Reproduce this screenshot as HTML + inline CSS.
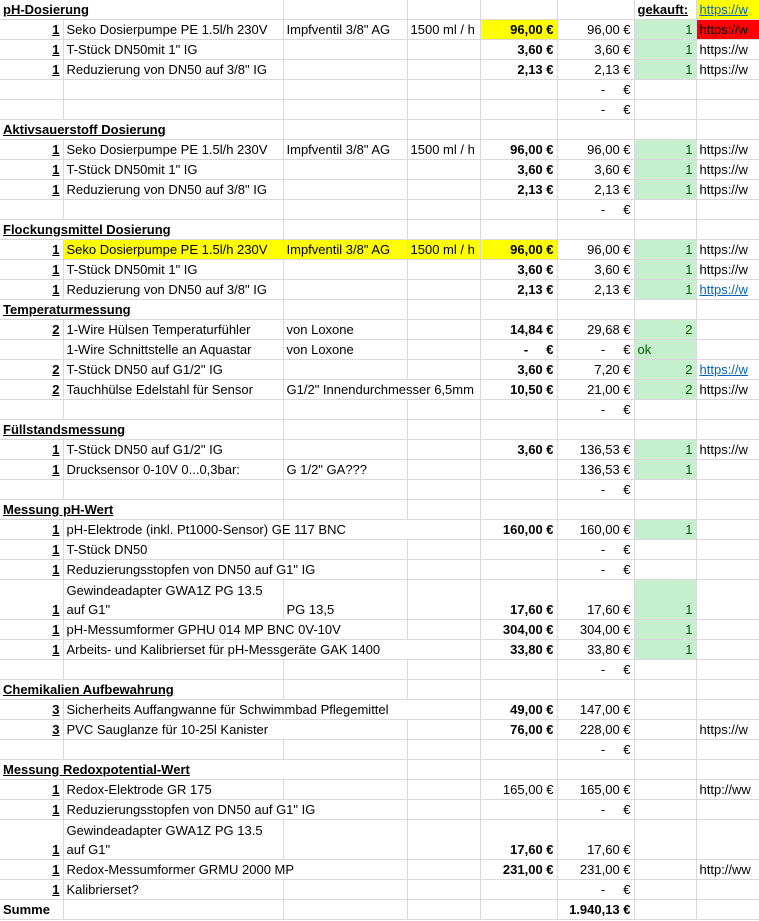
<!DOCTYPE html>
<html><head><meta charset="utf-8"><style>
body{margin:0;background:#fff;font-family:"Liberation Sans",sans-serif;font-size:13px;color:#000}
table{border-collapse:collapse;table-layout:fixed;width:759px}
td{height:19px;border-right:1px solid #d9d9d9;border-bottom:1px solid #d9d9d9;padding:0 3px;white-space:nowrap;overflow:hidden;vertical-align:bottom;line-height:18px}
tr.d td{height:39px}
td.q{text-align:right;font-weight:bold;text-decoration:underline}
td.h{font-weight:bold;text-decoration:underline}
td.r{text-align:right}
td.b{text-align:right;font-weight:bold}
td.g{background:#c6efce;color:#006100;text-align:right}
td.y{background:#ffff00}
td.red{background:#ff0000}
.l{color:#0563c1;text-decoration:underline}
td.w{white-space:normal;line-height:19px}
</style></head><body>
<table>
<colgroup><col style="width:63px"><col style="width:220px"><col style="width:124px"><col style="width:73px"><col style="width:77px"><col style="width:77px"><col style="width:62px"><col style="width:63px"></colgroup>
<tr><td class="h" colspan="2">pH-Dosierung</td><td></td><td></td><td></td><td></td><td class="h">gekauft:</td><td class="y"><span class="l">https://w</span></td></tr>
<tr><td class="q">1</td><td>Seko Dosierpumpe PE 1.5l/h 230V</td><td>Impfventil 3/8" AG</td><td>1500 ml / h</td><td class="b y">96,00 €</td><td class="r">96,00 €</td><td class="g">1</td><td class="red">https://w</td></tr>
<tr><td class="q">1</td><td>T-Stück DN50mit 1" IG</td><td></td><td></td><td class="b">3,60 €</td><td class="r">3,60 €</td><td class="g">1</td><td>https://w</td></tr>
<tr><td class="q">1</td><td>Reduzierung von DN50 auf 3/8" IG</td><td></td><td></td><td class="b">2,13 €</td><td class="r">2,13 €</td><td class="g">1</td><td>https://w</td></tr>
<tr><td></td><td></td><td></td><td></td><td></td><td class="r">-&nbsp;&nbsp;&nbsp;&nbsp;&nbsp;€</td><td></td><td></td></tr>
<tr><td></td><td></td><td></td><td></td><td></td><td class="r">-&nbsp;&nbsp;&nbsp;&nbsp;&nbsp;€</td><td></td><td></td></tr>
<tr><td class="h" colspan="2">Aktivsauerstoff Dosierung</td><td></td><td></td><td></td><td></td><td></td><td></td></tr>
<tr><td class="q">1</td><td>Seko Dosierpumpe PE 1.5l/h 230V</td><td>Impfventil 3/8" AG</td><td>1500 ml / h</td><td class="b">96,00 €</td><td class="r">96,00 €</td><td class="g">1</td><td>https://w</td></tr>
<tr><td class="q">1</td><td>T-Stück DN50mit 1" IG</td><td></td><td></td><td class="b">3,60 €</td><td class="r">3,60 €</td><td class="g">1</td><td>https://w</td></tr>
<tr><td class="q">1</td><td>Reduzierung von DN50 auf 3/8" IG</td><td></td><td></td><td class="b">2,13 €</td><td class="r">2,13 €</td><td class="g">1</td><td>https://w</td></tr>
<tr><td></td><td></td><td></td><td></td><td></td><td class="r">-&nbsp;&nbsp;&nbsp;&nbsp;&nbsp;€</td><td></td><td></td></tr>
<tr><td class="h" colspan="2">Flockungsmittel Dosierung</td><td></td><td></td><td></td><td></td><td></td><td></td></tr>
<tr><td class="q">1</td><td class="y">Seko Dosierpumpe PE 1.5l/h 230V</td><td class="y">Impfventil 3/8" AG</td><td class="y">1500 ml / h</td><td class="b y">96,00 €</td><td class="r">96,00 €</td><td class="g">1</td><td>https://w</td></tr>
<tr><td class="q">1</td><td>T-Stück DN50mit 1" IG</td><td></td><td></td><td class="b">3,60 €</td><td class="r">3,60 €</td><td class="g">1</td><td>https://w</td></tr>
<tr><td class="q">1</td><td>Reduzierung von DN50 auf 3/8" IG</td><td></td><td></td><td class="b">2,13 €</td><td class="r">2,13 €</td><td class="g">1</td><td><span class="l">https://w</span></td></tr>
<tr><td class="h" colspan="2">Temperaturmessung</td><td></td><td></td><td></td><td></td><td></td><td></td></tr>
<tr><td class="q">2</td><td>1-Wire Hülsen Temperaturfühler</td><td>von Loxone</td><td></td><td class="b">14,84 €</td><td class="r">29,68 €</td><td class="g">2</td><td></td></tr>
<tr><td></td><td>1-Wire Schnittstelle an Aquastar</td><td>von Loxone</td><td></td><td class="b">-&nbsp;&nbsp;&nbsp;&nbsp;&nbsp;€</td><td class="r">-&nbsp;&nbsp;&nbsp;&nbsp;&nbsp;€</td><td class="g" style="text-align:left">ok</td><td></td></tr>
<tr><td class="q">2</td><td>T-Stück DN50 auf G1/2" IG</td><td></td><td></td><td class="b">3,60 €</td><td class="r">7,20 €</td><td class="g">2</td><td><span class="l">https://w</span></td></tr>
<tr><td class="q">2</td><td>Tauchhülse Edelstahl für Sensor</td><td colspan="2">G1/2" Innendurchmesser 6,5mm</td><td class="b">10,50 €</td><td class="r">21,00 €</td><td class="g">2</td><td>https://w</td></tr>
<tr><td></td><td></td><td></td><td></td><td></td><td class="r">-&nbsp;&nbsp;&nbsp;&nbsp;&nbsp;€</td><td></td><td></td></tr>
<tr><td class="h" colspan="2">Füllstandsmessung</td><td></td><td></td><td></td><td></td><td></td><td></td></tr>
<tr><td class="q">1</td><td>T-Stück DN50 auf G1/2" IG</td><td></td><td></td><td class="b">3,60 €</td><td class="r">136,53 €</td><td class="g">1</td><td>https://w</td></tr>
<tr><td class="q">1</td><td>Drucksensor 0-10V 0...0,3bar:</td><td>G 1/2" GA???</td><td></td><td></td><td class="r">136,53 €</td><td class="g">1</td><td></td></tr>
<tr><td></td><td></td><td></td><td></td><td></td><td class="r">-&nbsp;&nbsp;&nbsp;&nbsp;&nbsp;€</td><td></td><td></td></tr>
<tr><td class="h" colspan="2">Messung pH-Wert</td><td></td><td></td><td></td><td></td><td></td><td></td></tr>
<tr><td class="q">1</td><td colspan="3">pH-Elektrode (inkl. Pt1000-Sensor) GE 117 BNC</td><td class="b">160,00 €</td><td class="r">160,00 €</td><td class="g">1</td><td></td></tr>
<tr><td class="q">1</td><td>T-Stück DN50</td><td></td><td></td><td></td><td class="r">-&nbsp;&nbsp;&nbsp;&nbsp;&nbsp;€</td><td></td><td></td></tr>
<tr><td class="q">1</td><td colspan="2">Reduzierungsstopfen von DN50 auf G1" IG</td><td></td><td></td><td class="r">-&nbsp;&nbsp;&nbsp;&nbsp;&nbsp;€</td><td></td><td></td></tr>
<tr class="d"><td class="q">1</td><td class="w">Gewindeadapter GWA1Z PG 13.5 auf G1"</td><td>PG 13,5</td><td></td><td class="b">17,60 €</td><td class="r">17,60 €</td><td class="g">1</td><td></td></tr>
<tr><td class="q">1</td><td colspan="2">pH-Messumformer GPHU 014 MP BNC 0V-10V</td><td></td><td class="b">304,00 €</td><td class="r">304,00 €</td><td class="g">1</td><td></td></tr>
<tr><td class="q">1</td><td colspan="3">Arbeits- und Kalibrierset für pH-Messgeräte GAK 1400</td><td class="b">33,80 €</td><td class="r">33,80 €</td><td class="g">1</td><td></td></tr>
<tr><td></td><td></td><td></td><td></td><td></td><td class="r">-&nbsp;&nbsp;&nbsp;&nbsp;&nbsp;€</td><td></td><td></td></tr>
<tr><td class="h" colspan="2">Chemikalien Aufbewahrung</td><td></td><td></td><td></td><td></td><td></td><td></td></tr>
<tr><td class="q">3</td><td colspan="3">Sicherheits Auffangwanne für Schwimmbad Pflegemittel</td><td class="b">49,00 €</td><td class="r">147,00 €</td><td></td><td></td></tr>
<tr><td class="q">3</td><td colspan="2">PVC Sauglanze für 10-25l Kanister</td><td></td><td class="b">76,00 €</td><td class="r">228,00 €</td><td></td><td>https://w</td></tr>
<tr><td></td><td></td><td></td><td></td><td></td><td class="r">-&nbsp;&nbsp;&nbsp;&nbsp;&nbsp;€</td><td></td><td></td></tr>
<tr><td class="h" colspan="3">Messung Redoxpotential-Wert</td><td></td><td></td><td></td><td></td><td></td></tr>
<tr><td class="q">1</td><td>Redox-Elektrode GR 175</td><td></td><td></td><td class="r">165,00 €</td><td class="r">165,00 €</td><td></td><td>http://ww</td></tr>
<tr><td class="q">1</td><td colspan="2">Reduzierungsstopfen von DN50 auf G1" IG</td><td></td><td></td><td class="r">-&nbsp;&nbsp;&nbsp;&nbsp;&nbsp;€</td><td></td><td></td></tr>
<tr class="d"><td class="q">1</td><td class="w">Gewindeadapter GWA1Z PG 13.5 auf G1"</td><td></td><td></td><td class="b">17,60 €</td><td class="r">17,60 €</td><td></td><td></td></tr>
<tr><td class="q">1</td><td colspan="2">Redox-Messumformer GRMU 2000 MP</td><td></td><td class="b">231,00 €</td><td class="r">231,00 €</td><td></td><td>http://ww</td></tr>
<tr><td class="q">1</td><td>Kalibrierset?</td><td></td><td></td><td></td><td class="r">-&nbsp;&nbsp;&nbsp;&nbsp;&nbsp;€</td><td></td><td></td></tr>
<tr><td style="font-weight:bold">Summe</td><td></td><td></td><td></td><td></td><td class="b">1.940,13 €</td><td></td><td></td></tr>
</table>
</body></html>
